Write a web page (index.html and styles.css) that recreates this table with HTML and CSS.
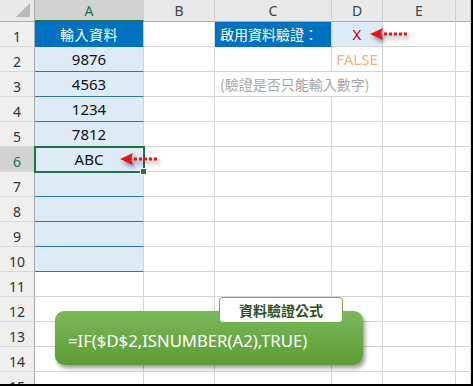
FILE: index.html
```html
<!DOCTYPE html>
<html>
<head>
<meta charset="utf-8">
<link rel="stylesheet" href="styles.css">
</head>
<body>
<div class="frame">
  <div class="sheet">
    <div class="corner"><span class="tri"></span></div>
    <div class="ch sel">A</div><div class="ch">B</div><div class="ch">C</div><div class="ch">D</div><div class="ch">E</div><div class="ch last"></div>

    <div class="rh">1</div><div class="c hdr">輸入資料</div><div class="c"></div><div class="c hdr left">啟用資料驗證：</div><div class="c xcell">X</div><div class="c"></div><div class="c last"></div>
    <div class="rh">2</div><div class="c a">9876</div><div class="c"></div><div class="c"></div><div class="c false">FALSE</div><div class="c"></div><div class="c last"></div>
    <div class="rh">3</div><div class="c a">4563</div><div class="c"></div><div class="c note">(驗證是否只能輸入數字)</div><div class="c"></div><div class="c"></div><div class="c last"></div>
    <div class="rh">4</div><div class="c a">1234</div><div class="c"></div><div class="c"></div><div class="c"></div><div class="c"></div><div class="c last"></div>
    <div class="rh">5</div><div class="c a">7812</div><div class="c"></div><div class="c"></div><div class="c"></div><div class="c"></div><div class="c last"></div>
    <div class="rh rsel">6</div><div class="c a active">ABC<span class="handle"></span></div><div class="c"></div><div class="c"></div><div class="c"></div><div class="c"></div><div class="c last"></div>
    <div class="rh">7</div><div class="c a"></div><div class="c"></div><div class="c"></div><div class="c"></div><div class="c"></div><div class="c last"></div>
    <div class="rh">8</div><div class="c a"></div><div class="c"></div><div class="c"></div><div class="c"></div><div class="c"></div><div class="c last"></div>
    <div class="rh">9</div><div class="c a"></div><div class="c"></div><div class="c"></div><div class="c"></div><div class="c"></div><div class="c last"></div>
    <div class="rh">10</div><div class="c a"></div><div class="c"></div><div class="c"></div><div class="c"></div><div class="c"></div><div class="c last"></div>
    <div class="rh">11</div><div class="c"></div><div class="c"></div><div class="c"></div><div class="c"></div><div class="c"></div><div class="c last"></div>
    <div class="rh">12</div><div class="c"></div><div class="c"></div><div class="c"></div><div class="c"></div><div class="c"></div><div class="c last"></div>
    <div class="rh">13</div><div class="c"></div><div class="c"></div><div class="c"></div><div class="c"></div><div class="c"></div><div class="c last"></div>
    <div class="rh">14</div><div class="c"></div><div class="c"></div><div class="c"></div><div class="c"></div><div class="c"></div><div class="c last"></div>
    <div class="rh">15</div><div class="c"></div><div class="c"></div><div class="c"></div><div class="c"></div><div class="c"></div><div class="c last"></div>
  </div>

  <svg class="arrow arrow-a6" width="46" height="16" viewBox="0 0 46 16">
    <g fill="#e8141c">
      <path d="M1 8 L14 2 Q11 8 14 14 Z"/>
      <rect x="15" y="6.5" width="3" height="3"/>
      <rect x="20" y="6.5" width="3" height="3"/>
      <rect x="25" y="6.5" width="3" height="3"/>
      <rect x="30" y="6.5" width="3" height="3"/>
      <rect x="35" y="6.5" width="3" height="3"/>
    </g>
  </svg>
  <svg class="arrow arrow-d1" width="46" height="16" viewBox="0 0 46 16">
    <g fill="#e8141c">
      <path d="M1 8 L14 2 Q11 8 14 14 Z"/>
      <rect x="15" y="6.5" width="3" height="3"/>
      <rect x="20" y="6.5" width="3" height="3"/>
      <rect x="25" y="6.5" width="3" height="3"/>
      <rect x="30" y="6.5" width="3" height="3"/>
      <rect x="35" y="6.5" width="3" height="3"/>
    </g>
  </svg>

  <div class="formula">=IF($D$2,ISNUMBER(A2),TRUE)</div>
  <div class="label">資料驗證公式</div>
</div>
</body>
</html>
```
FILE: styles.css
```css
html, body {
  margin: 0;
  padding: 0;
  background: #fff;
}
.frame {
  position: relative;
  width: 471px;
  height: 384px;
  border-right: 2px solid #000;
  border-bottom: 2px solid #000;
  overflow: hidden;
  font-family: "Noto Sans", "Noto Sans CJK TC", sans-serif;
}
.sheet {
  display: grid;
  grid-template-columns: 35px 109px 71px 117px 51px 73px 15px;
  grid-template-rows: 22px repeat(15, 25px);
}
.sheet > div {
  box-sizing: border-box;
  border-right: 1px solid #d4d4d4;
  border-bottom: 1px solid #d4d4d4;
  display: flex;
  align-items: center;
  justify-content: center;
  white-space: nowrap;
}
.corner {
  background: #e9e9e9;
  position: relative;
  border-right-color: #ababab !important;
  border-bottom-color: #ababab !important;
}
.tri {
  position: absolute;
  right: 4px;
  bottom: 4px;
  width: 0;
  height: 0;
  border-left: 14px solid transparent;
  border-bottom: 14px solid #b9b9b9;
}
.ch {
  background: #e9e9e9;
  color: #444;
  font-size: 14px;
  border-bottom-color: #ababab !important;
  border-right-color: #d0d0d0 !important;
}
.ch.sel {
  background: #d2d2d2;
  color: #217346;
  border-bottom: 2px solid #217346 !important;
}
.rh {
  background: #efefef;
  color: #333;
  font-size: 14px;
  border-right-color: #ababab !important;
  border-bottom-color: #d8d8d8 !important;
  padding-top: 4px;
}
.rh.rsel {
  background: #d2d2d2;
  color: #217346;
}
.c {
  font-size: 15px;
  color: #111;
}
.c.hdr {
  background: #0070c0;
  color: #fff;
  font-family: "Noto Sans CJK TC", sans-serif;
  font-size: 14px;
  letter-spacing: 0.5px;
  border-bottom-color: #0070c0 !important;
}
.c.hdr.left {
  justify-content: flex-start;
  padding-left: 5px;
  letter-spacing: 0;
}
.c.xcell {
  background: #ddebf7;
  color: #c00000;
  font-size: 15px;
}
.c.false {
  color: #f4b183;
  font-size: 15px;
}
.c.note {
  justify-content: flex-start;
  padding-left: 5px;
  overflow: visible;
  color: #a6a6a6;
  font-family: "Noto Sans CJK TC", sans-serif;
  font-size: 14px;
  border-right: none !important;
  position: relative;
  z-index: 1;
}
.c.a {
  background: #ddebf7;
  border-bottom: 1px solid #2e75b6 !important;
}
.c.active {
  position: relative;
  outline: 2px solid #217346;
  outline-offset: -1px;
  z-index: 2;
}
.handle {
  position: absolute;
  right: -4px;
  bottom: -4px;
  width: 5px;
  height: 5px;
  background: #217346;
  border: 1px solid #fff;
}
.arrow {
  position: absolute;
  z-index: 5;
  filter: drop-shadow(2px 3px 2px rgba(0,0,0,0.45));
}
.arrow-a6 {
  left: 119px;
  top: 151px;
}
.arrow-d1 {
  left: 369px;
  top: 26px;
}
.formula {
  position: absolute;
  z-index: 5;
  left: 55px;
  top: 311px;
  width: 308px;
  height: 54px;
  box-sizing: border-box;
  border-radius: 9px;
  background: linear-gradient(#7cb85b, #5c9c33);
  box-shadow: 2px 3px 4px rgba(0,0,0,0.4);
  color: #fff;
  font-family: "Noto Sans", sans-serif;
  font-size: 16.7px;
  padding: 20px 0 0 13px;
  line-height: 20px;
  white-space: nowrap;
}
.label {
  position: absolute;
  z-index: 6;
  left: 219px;
  top: 297px;
  width: 124px;
  height: 26px;
  box-sizing: border-box;
  background: #fff;
  border: 1px solid #70ad47;
  border-radius: 4px;
  color: #2f4f22;
  font-family: "Noto Sans CJK TC", sans-serif;
  font-size: 14px;
  font-weight: bold;
  display: flex;
  align-items: center;
  justify-content: center;
}
```
